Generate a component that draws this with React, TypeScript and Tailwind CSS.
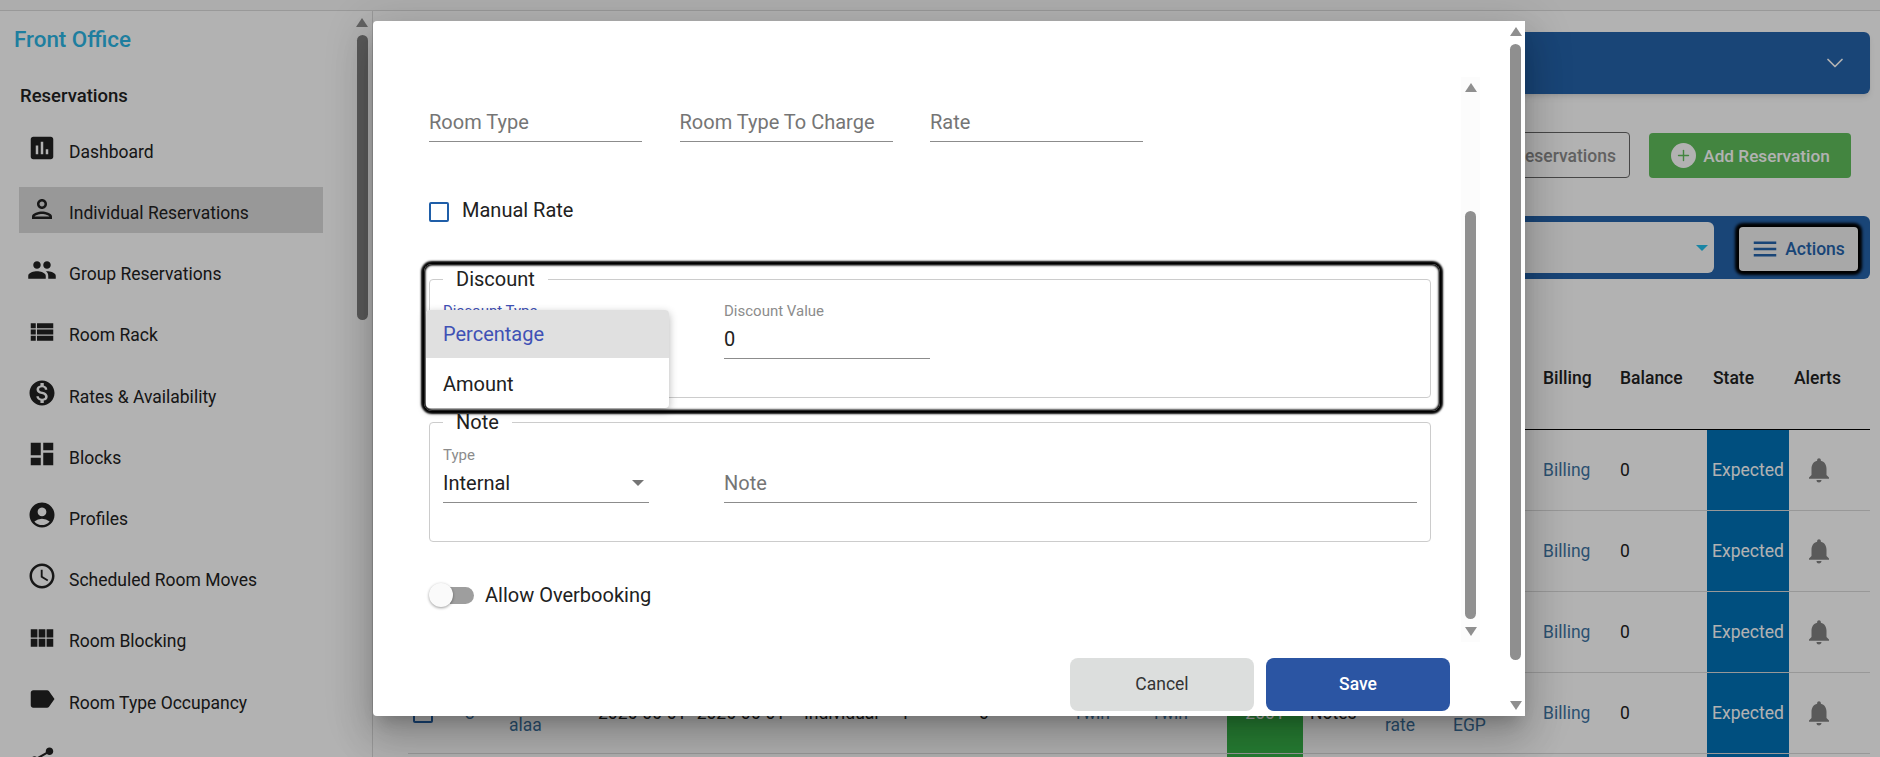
import React from 'react';
import { ChevronDown, Plus } from 'lucide-react';
import {
  MdAssessment,
  MdOutlinePerson,
  MdPeople,
  MdViewList,
  MdMonetizationOn,
  MdDashboard,
  MdAccountCircle,
  MdOutlineSchedule,
  MdViewModule,
  MdLabel,
  MdShare,
  MdNotifications,
  MdMenu,
} from 'react-icons/md';

const navItems = [
  { label: 'Dashboard', icon: MdAssessment },
  { label: 'Individual Reservations', icon: MdOutlinePerson, active: true },
  { label: 'Group Reservations', icon: MdPeople },
  { label: 'Room Rack', icon: MdViewList },
  { label: 'Rates & Availability', icon: MdMonetizationOn },
  { label: 'Blocks', icon: MdDashboard },
  { label: 'Profiles', icon: MdAccountCircle },
  { label: 'Scheduled Room Moves', icon: MdOutlineSchedule },
  { label: 'Room Blocking', icon: MdViewModule },
  { label: 'Room Type Occupancy', icon: MdLabel },
  { label: 'Reports', icon: MdShare },
];

const tableCols =
  'grid grid-cols-[57px_44px_89px_206px_94px_79px_96px_78px_76px_76px_82px_68px_90px_77px_87px_82px_81px]';

function ArrowUp() {
  return <div className="h-0 w-0 border-x-[6px] border-b-[9px] border-x-transparent border-b-[#8f8f8f]" />;
}

function ArrowDown() {
  return <div className="h-0 w-0 border-x-[6px] border-t-[9px] border-x-transparent border-t-[#8f8f8f]" />;
}

function UnderlineField({ label }: { label: string }) {
  return (
    <div className="h-[36px] w-[213px] border-b border-[#8c8c8c] text-[20px] leading-[32px] text-[#757575]">
      {label}
    </div>
  );
}

function Sidebar() {
  return (
    <aside className="flex h-[746px] w-[373px] shrink-0 overflow-hidden border-r border-[#dcdcdc]">
      <div className="w-[356px] shrink-0 pt-[14px]">
        <div className="pl-[14px] text-[22.4px] font-medium leading-[28px] text-[#2bb5e4]">Front Office</div>
        <div className="mt-[29px] pl-[20px] text-[18.5px] font-medium leading-[28px] text-[#212121]">Reservations</div>
        <nav className="mt-[16px] ml-[19px] w-[304px]">
          {navItems.map(item => {
            const Icon = item.icon;
            return (
              <div
                key={item.label}
                className={`mb-[15.2px] flex h-[46px] items-center gap-[12px] pl-[8px] text-[17.5px] text-[#212121] ${item.active ? 'bg-[#dadada]' : ''}`}
              >
                <Icon className="-mt-[2px] h-[30px] w-[30px] shrink-0 text-[#212121]" />
                <span className="pt-[6px]">{item.label}</span>
              </div>
            );
          })}
        </nav>
      </div>
      <div className="flex w-[12px] flex-col items-center pt-[7px]">
        <ArrowUp />
        <div className="mt-[8px] h-[285px] w-[11px] rounded-full bg-[#828282]" />
      </div>
    </aside>
  );
}

function MainContent() {
  return (
    <main className="min-w-0 flex-1 pt-[21px] pr-[10px] pl-[35px]">
      <div className="flex h-[62px] items-center justify-end rounded-md bg-[#2563ab] pr-[21px] shadow-md">
        <ChevronDown size={28} strokeWidth={1.5} className="text-white" />
      </div>

      <div className="mt-[38px] flex justify-end gap-[19px] pr-[19px]">
        <div className="flex h-[46px] w-[300px] items-center justify-end rounded border border-[#666] pt-[2px] pr-[13px] text-[17.5px] font-medium text-[#8c8c8c]">
          Group Reservations
        </div>
        <div className="mt-px flex h-[45px] w-[202px] items-center justify-center gap-[7px] rounded bg-[#60bf5c] text-[17.2px] font-medium text-white">
          <span className="ml-px flex h-[25px] w-[25px] items-center justify-center rounded-full bg-white">
            <Plus size={17} className="text-[#60bf5c]" />
          </span>
          <span className="pt-[2px]">Add Reservation</span>
        </div>
      </div>

      <div className="mt-[38px] flex h-[63px] items-start justify-end gap-[25px] rounded-md bg-[#2563ab] pr-[12px]">
        <div className="mt-[6px] flex h-[51px] w-[400px] items-center justify-end rounded-md bg-[#fbfbfb] pr-[6px]">
          <div className="h-0 w-0 border-x-[6px] border-t-[6px] border-x-transparent border-t-[#25bfec]" />
        </div>
        <div className="mt-[11px] flex h-[44px] w-[119px] items-center justify-center gap-[5px] rounded-[4px] bg-[#f1f1f1] pr-[2px] text-[17.5px] font-medium text-[#2563ab] shadow-[0_0_3px_4px_#000]">
          <MdMenu className="h-[30px] w-[30px]" />
          Actions
        </div>
      </div>

      <div className={`${tableCols} mt-[85px] h-[66px] items-start border-b border-black text-[17.5px] font-medium leading-[28px] text-[#212121]`}>
        <div className="col-start-14">Billing</div>
        <div>Balance</div>
        <div className="pl-[6px]">State</div>
        <div className="pl-[5px]">Alerts</div>
      </div>

      {[0, 1, 2, 3, 4].map(i => (
        <div key={i} className={`${tableCols} h-[81px] items-center border-b border-[#dadada] text-[17.5px] leading-[24px] text-[#212121]`}>
          <div className="ml-[5px] h-[20px] w-[20px] rounded-[2px] border-2 border-[#2563ab]" />
          <div className="text-[#3e75a3]">{i}</div>
          <div className="text-[#3e75a3]">Ahmed alaa</div>
          <div className="[word-spacing:6px]">2026-06-01 2026-06-01</div>
          <div>Individual</div>
          <div className="pl-[2px]">1</div>
          <div className="pl-[2px]">0</div>
          <div className="text-[#3e75a3]">Twin</div>
          <div className="text-[#3e75a3]">Twin</div>
          <div className="flex h-full items-center justify-center bg-[#38b54a] text-white">2001</div>
          <div className="pl-[7px]">Notes</div>
          <div className="text-[#3e75a3]">
            Fixed
            <br />
            rate
          </div>
          <div className="text-[#3e75a3]">
            0
            <br />
            EGP
          </div>
          <div className="text-[#3e75a3]">Billing</div>
          <div>0</div>
          <div className="flex h-full items-center justify-center bg-[#0072b7] text-white">Expected</div>
          <div className="pl-[15px]">
            <MdNotifications className="h-[30px] w-[30px] text-[#828282]" />
          </div>
        </div>
      ))}
    </main>
  );
}

function ReservationDialog() {
  return (
    <div className="absolute top-[21px] left-[373px] flex h-[695px] w-[1152px] rounded-l bg-white shadow-[0_11px_15px_-7px_rgba(0,0,0,0.2),0_24px_38px_3px_rgba(0,0,0,0.14),0_9px_46px_8px_rgba(0,0,0,0.12)]">
      <div className="flex w-[1136px] flex-col">
        <div className="flex h-[622px] pt-[56px]">
          <div className="w-[1088px] pl-[56px]">
            <div className="flex gap-[37.5px] pt-[29px]">
              <UnderlineField label="Room Type" />
              <UnderlineField label="Room Type To Charge" />
              <UnderlineField label="Rate" />
            </div>

            <div className="mt-[56px] flex items-start gap-[13px] text-[20px] leading-[24px] text-[#212121]">
              <div className="mt-[4px] h-[20px] w-[20px] rounded-[2px] border-2 border-[#1f5ea8]" />
              Manual Rate
            </div>

            {/* focus ring around the discount group */}
            <div className="relative mt-[42px] -ml-[5px] h-[147px] w-[1016px] rounded-lg pt-[3px] shadow-[0_0_2px_3px_#000,inset_0_0_2px_1.5px_#000]">
              <fieldset className="ml-[5px] h-[131px] w-[1002px] rounded border border-[#ccc] px-[13px]">
                <legend className="px-[13px] text-[20px] leading-[24px] text-[#212121]">Discount</legend>
                <div className="flex pt-[10px]">
                  <div className="w-[281px] text-[15px] leading-[20px] text-[#3f51b5]">Discount Type</div>
                  <div className="w-[206px]">
                    <div className="text-[15px] leading-[20px] text-[#8c8c8c]">Discount Value</div>
                    <div className="h-[38px] border-b border-[#8c8c8c] text-[20px] leading-[36px] text-[#212121]">0</div>
                  </div>
                </div>
              </fieldset>
              <div className="absolute top-[46px] left-[2px] w-[243px] overflow-hidden rounded bg-white text-[20px] shadow-[0_3px_8px_rgba(0,0,0,0.3)]">
                <div className="h-[48px] bg-[#e0e0e0] pl-[17px] leading-[48px] text-[#3f51b5]">Percentage</div>
                <div className="h-[50px] pl-[17px] leading-[52px] text-[#212121]">Amount</div>
              </div>
            </div>

            <fieldset className="-mt-px h-[132px] w-[1002px] rounded border border-[#ccc] px-[13px]">
              <legend className="px-[13px] text-[20px] leading-[24px] text-[#212121]">Note</legend>
              <div className="flex pt-[11px]">
                <div className="w-[206px]">
                  <div className="text-[15px] leading-[20px] text-[#8c8c8c]">Type</div>
                  <div className="flex h-[38px] items-center justify-between border-b border-[#8c8c8c] pr-[5px] pb-[2px] text-[20px] text-[#212121]">
                    Internal
                    <div className="h-0 w-0 border-x-[6px] border-t-[6px] border-x-transparent border-t-[#757575]" />
                  </div>
                </div>
                <div className="ml-[75px] w-[693px] pt-[20px]">
                  <div className="h-[38px] border-b border-[#8c8c8c] text-[20px] leading-[36px] text-[#757575]">Note</div>
                </div>
              </div>
            </fieldset>

            <div className="mt-[38px] flex items-center gap-[11px] text-[20px] leading-[30px] text-[#212121]">
              <div className="relative h-[17px] w-[45px]">
                <div className="ml-[21px] h-[17px] w-[24px] rounded-r-full bg-[#9e9e9e]" />
                <div className="absolute -top-[4px] left-0 h-[24px] w-[24px] rounded-full bg-[#fafafa] shadow-[0_1px_3px_rgba(0,0,0,0.4)]" />
              </div>
              Allow Overbooking
            </div>
          </div>

          <div className="flex h-[565px] w-[19px] flex-col items-center bg-[#fcfcfc] pt-[6px]">
            <ArrowUp />
            <div className="mt-[119px] h-[408px] w-[11px] rounded-full bg-[#8f8f8f]" />
            <div className="mt-[8px]">
              <ArrowDown />
            </div>
          </div>
        </div>
        <div className="flex justify-end gap-[12px] pt-[15px] pr-[59px]">
          <div className="flex h-[53px] w-[184px] items-center justify-center rounded-lg bg-[#dcdedd] text-[17.5px] text-[#333]">Cancel</div>
          <div className="flex h-[53px] w-[184px] items-center justify-center rounded-lg bg-[#2b55a3] text-[17.5px] font-medium text-white">Save</div>
        </div>
      </div>

      <div className="flex w-[16px] flex-col items-center pt-[6px] pr-[3px]">
        <ArrowUp />
        <div className="mt-[8px] h-[616px] w-[11px] rounded-full bg-[#8f8f8f]" />
        <div className="mt-[41px]">
          <ArrowDown />
        </div>
      </div>
    </div>
  );
}

export default function App() {
  return (
    <div className="relative h-[757px] w-[1880px] overflow-hidden bg-white font-['Roboto',sans-serif]">
      <div className="h-[11px] border-b border-[#dcdcdc] bg-[#f8f8f8]" />
      <div className="flex">
        <Sidebar />
        <MainContent />
      </div>
      {/* modal backdrop */}
      <div className="absolute inset-0 bg-black/30" />
      <ReservationDialog />
    </div>
  );
}
